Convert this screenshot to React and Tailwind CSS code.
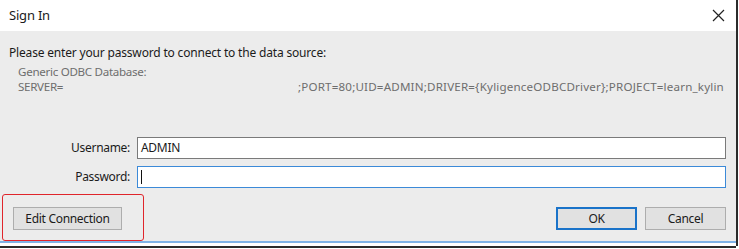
import React from "react";

export default function App() {
    return (
        <div
            className="w-[739px] h-[249px] bg-white flex flex-col relative overflow-hidden text-[#1b1b1b]"
            style={{ fontFamily: '"Noto Sans", "Open Sans", sans-serif' }}
        >
            <div className="flex-1 flex flex-col border-r-2 border-[#2b2b2b] mr-[1px]">
                {/* Title bar */}
                <div className="h-[31px] bg-white flex items-center justify-between pl-[9px] pr-[10px]">
                    <span className="text-[13px] tracking-[-0.2px]">Sign In</span>
                    <svg width="13" height="13" viewBox="0 0 13 13" className="mr-[1px]">
                        <path d="M1 1 L12 12 M12 1 L1 12" stroke="#222" strokeWidth="1.2" />
                    </svg>
                </div>

                {/* Body */}
                <div className="h-[210px] bg-[#ececec] flex flex-col text-[12px] leading-[14px] tracking-[-0.3px]">
                    <div className="pl-[9px] pt-[15px] tracking-[-0.18px]">Please enter your password to connect to the data source:</div>
                    <div className="pl-[18px] pt-[4px] text-[#6e6e6e] text-[11.6px] leading-[15px]">
                        <div>Generic ODBC Database:</div>
                        <div className="flex">
                            <span className="w-[280px]">SERVER=</span>
                            <span className="tracking-[0.18px]">;PORT=80;UID=ADMIN;DRIVER={"{"}KyligenceODBCDriver{"}"};PROJECT=learn_kylin</span>
                        </div>
                    </div>

                    {/* Form */}
                    <div className="flex flex-col gap-[7px] mt-[43px]">
                        <div className="flex items-center">
                            <span className="w-[130px] text-right">Username:</span>
                            <div className="ml-[7px] w-[589px] h-[22px] bg-white border border-[#7a7a7a] flex items-center pl-[3px]">ADMIN</div>
                        </div>
                        <div className="flex items-center">
                            <span className="w-[130px] text-right">Password:</span>
                            <div className="ml-[7px] w-[589px] h-[22px] bg-white border border-[#3c8ad8] flex items-center pl-[3px]">
                                <span className="w-[1px] h-[14px] bg-[#111]" />
                            </div>
                        </div>
                    </div>

                    {/* Buttons */}
                    <div className="flex items-center mt-[19px] pl-[13px]">
                        <button className="w-[109px] h-[23px] bg-[#e1e1e1] border border-[#adadad] text-[12px]">Edit Connection</button>
                        <button className="ml-auto w-[81px] h-[23px] bg-[#e1e1e1] border-2 border-[#1a73c9] text-[12px]">OK</button>
                        <button className="ml-[8px] mr-[10px] w-[81px] h-[23px] bg-[#e1e1e1] border border-[#adadad] text-[12px]">Cancel</button>
                    </div>
                </div>

                <div className="h-[2px] bg-[#7fb2e6]" />
                <div className="h-[2px] bg-white" />
            </div>
            <div className="h-[2px] bg-[#2b2b2b] mr-[3px]" />
            <div className="h-[1px] bg-white" />

            {/* Red annotation box */}
            <div className="absolute left-[2px] top-[194px] w-[142px] h-[47px] border-[1.5px] border-[#e0252b] rounded-[3px]" />
        </div>
    );
}
